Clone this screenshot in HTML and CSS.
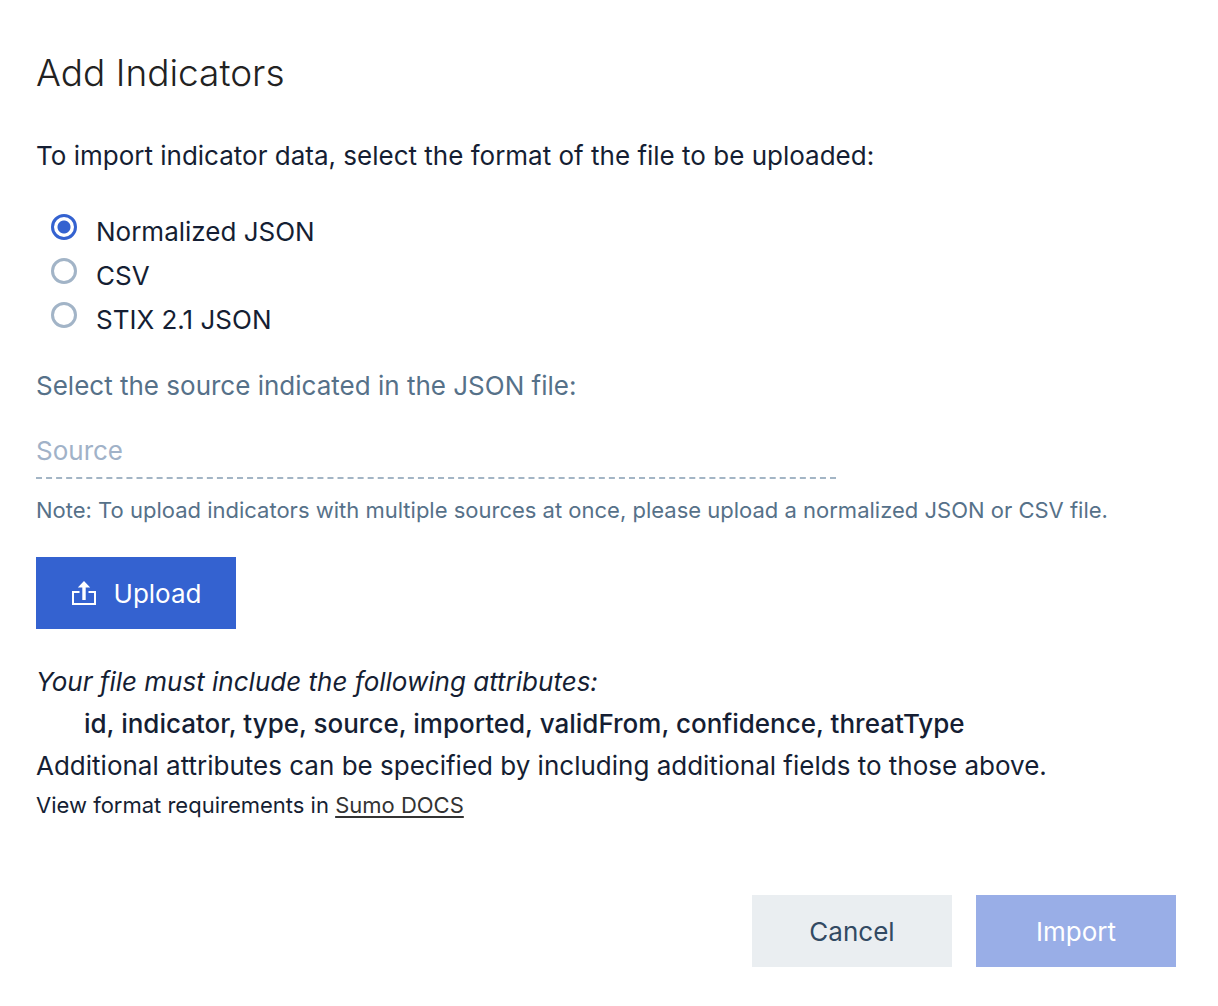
FILE: index.html
```html
<!DOCTYPE html>
<html lang="en">
<head>
<meta charset="utf-8">
<meta name="viewport" content="width=device-width, initial-scale=1">
<title>Add Indicators</title>
<link rel="stylesheet" href="styles.css">
</head>
<body>
<main class="dialog">
  <h1 class="title">Add Indicators</h1>
  <form class="form">
    <fieldset class="formats">
      <legend class="intro">To import indicator data, select the format of the file to be uploaded:</legend>
      <label class="option"><input class="radio" type="radio" name="format" value="json" checked>Normalized JSON</label>
      <label class="option"><input class="radio" type="radio" name="format" value="csv">CSV</label>
      <label class="option"><input class="radio" type="radio" name="format" value="stix">STIX 2.1 JSON</label>
    </fieldset>
    <label class="source-label" for="source">Select the source indicated in the JSON file:</label>
    <input class="source" id="source" type="text" placeholder="Source">
    <p class="note">Note: To upload indicators with multiple sources at once, please upload a normalized JSON or CSV file.</p>
    <button class="button upload" type="button">
      <svg class="icon" viewBox="0 0 26 26" aria-hidden="true">
        <path d="M8.5 11H2v12h22V11h-6.500" fill="none" stroke="currentColor" stroke-width="2"/>
        <path d="M13 0l6.200 6.500h-4.500V19h-3.400V6.500H6.800z" fill="currentColor"/>
      </svg>
      Upload
    </button>
    <div class="requirements">
      <p class="lead">Your file must include the following attributes:</p>
      <p class="attributes">id, indicator, type, source, imported, validFrom, confidence, threatType</p>
      <p>Additional attributes can be specified by including additional fields to those above.</p>
      <p class="docs">View format requirements in <a class="link" href="#docs">Sumo DOCS</a></p>
    </div>
    <div class="actions">
      <button class="button cancel" type="button">Cancel</button>
      <button class="button import" type="submit" disabled>Import</button>
    </div>
  </form>
</main>
</body>
</html>
```
FILE: styles.css
```css
* { box-sizing: border-box; }

body {
  margin: 0;
  background: #fff;
  color: #151e33;
  font-family: Inter, "Liberation Sans", sans-serif;
  font-size: 26px;
  line-height: 42px;
}

p { margin: 0; }

.dialog { padding: 48px 42px 39px 36px; }

.title {
  margin: 0 0 37px;
  color: #222;
  font-size: 37px;
  font-weight: 300;
  line-height: 50px;
}

.form { display: flex; flex-direction: column; }

.formats {
  display: flex;
  flex-direction: column;
  min-width: 0;
  margin: 0 0 23px;
  padding: 0;
  border: 0;
}

.intro { margin-bottom: 33px; padding: 0; }

.option {
  display: flex;
  gap: 19px;
  padding-left: 15px;
  line-height: 44px;
}

.radio {
  appearance: none;
  flex: none;
  width: 26px;
  height: 26px;
  margin: 4px 0 0;
  border: 3px solid #a2b4c7;
  border-radius: 50%;
  background: #fff;
}

.radio:checked {
  border-color: #3462d0;
  background: radial-gradient(circle, #3462d0 6px, #fff 7px);
}

.source-label { color: #567189; }

.source {
  width: 100%;
  max-width: 800px;
  height: 56px;
  margin-top: 16px;
  padding: 0;
  border: 0;
  border-bottom: 2px dashed #a3b5c5;
  background: none;
  color: inherit;
  font: inherit;
}

.source::placeholder { color: #a1b2c8; opacity: 1; }

.note {
  margin: 12px 0 28px;
  color: #567189;
  font-size: 22px;
  line-height: 38px;
}

.button {
  width: 200px;
  height: 72px;
  padding: 2px 0 0;
  border: 0;
  font: inherit;
}

.upload {
  display: flex;
  align-items: center;
  justify-content: center;
  gap: 17px;
  background: #3462d0;
  color: #fff;
}

.icon { width: 26px; height: 26px; }

.requirements { margin-top: 32px; }
.lead { font-style: italic; }
.attributes { padding-left: 48px; font-weight: 500; }
.docs { font-size: 22px; line-height: 36px; }
.link { color: #333; text-underline-offset: 3px; text-decoration-thickness: 2px; }

.actions {
  display: flex;
  justify-content: flex-end;
  gap: 24px;
  margin-top: 72px;
}

.cancel { background: #eaeef1; color: #324a63; }
.import { background: #99aee7; color: #fff; }
```
